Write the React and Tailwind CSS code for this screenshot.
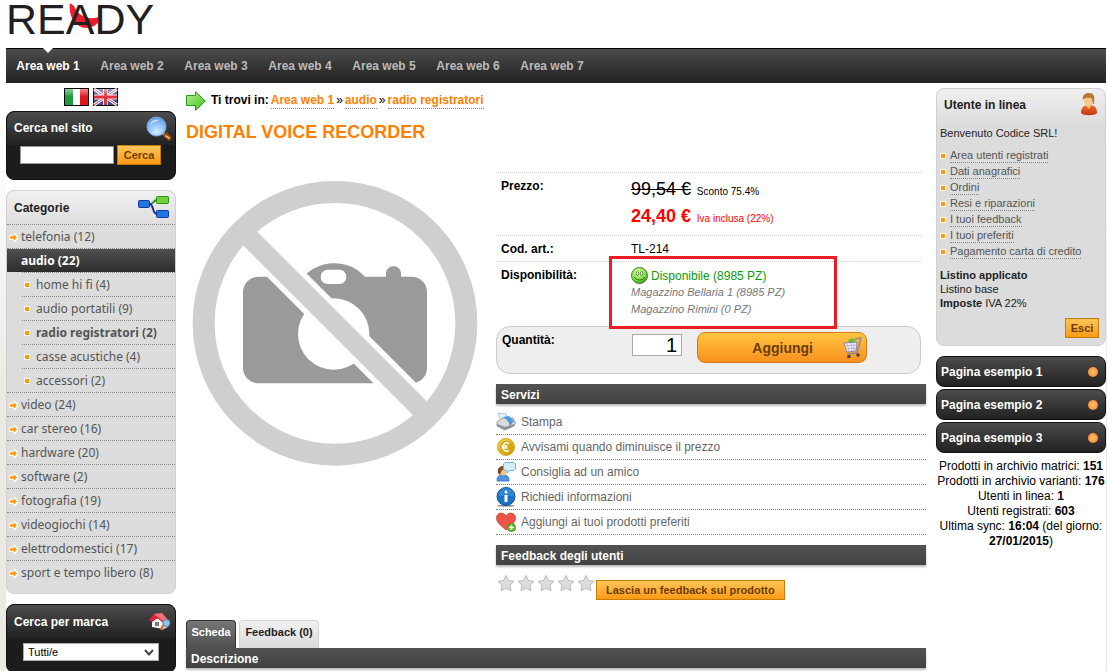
import React,{useState} from "react";

const areas=[
"Area web 1",
"Area web 2",
"Area web 3",
"Area web 4",
"Area web 5",
"Area web 6",
"Area web 7"
]

const categories=[
{name:"telefonia (12)"},
{name:"audio (22)",open:true,children:[
"home hi fi (4)",
"audio portatili (9)",
"radio registratori (2)",
"casse acustiche (4)",
"accessori (2)"
]},
{name:"video (24)"},
{name:"car stereo (16)"},
{name:"hardware (20)"},
{name:"software (2)"},
{name:"fotografia (19)"},
{name:"videogiochi (14)"},
{name:"elettrodomestici (17)"},
{name:"sport e tempo libero (8)"}
]

const userLinks=[
"Area utenti registrati",
"Dati anagrafici",
"Ordini",
"Resi e riparazioni",
"I tuoi feedback",
"I tuoi preferiti",
"Pagamento carta di credito"
]

const pages=["Pagina esempio 1","Pagina esempio 2","Pagina esempio 3"]

function Logo(){

return(

<a href="#" aria-label="READY" className="relative block h-12 w-fit text-[43px] leading-[38px] text-[#231f20]">
<svg className="absolute top-[2px] left-[63px] h-[26px] w-[34px]" viewBox="0 0 34 26" aria-hidden="true">
<path d="M1 1C-1 14 6 25 17 26C25 26 30 21 33 14C22 19 9 15 5 4Z" fill="#ed1c2e"/>
</svg>
<span className="relative block h-12">READY</span>
</a>

)

}

function FlagItaly(){

return(

<svg width="25" height="18" viewBox="0 0 25 18" aria-hidden="true">
<defs>
<linearGradient id="flagGloss" x1="0" y1="0" x2="0" y2="1">
<stop offset="0" stopColor="#fff" stopOpacity=".5"/>
<stop offset=".5" stopColor="#fff" stopOpacity="0"/>
</linearGradient>
</defs>
<rect width="25" height="18" fill="#000"/>
<rect x="1" y="1" width="8" height="16" fill="#1a9b3c"/>
<rect x="9" y="1" width="7" height="16" fill="#fff"/>
<rect x="16" y="1" width="8" height="16" fill="#e3131b"/>
<rect x="1" y="1" width="23" height="16" fill="url(#flagGloss)"/>
</svg>

)

}

function FlagUk(){

return(

<svg width="25" height="18" viewBox="0 0 25 18" aria-hidden="true">
<rect width="25" height="18" fill="#000"/>
<rect x="1" y="1" width="23" height="16" fill="#3a4f96"/>
<path d="M1 1L24 17M24 1L1 17" stroke="#fff" strokeWidth="3"/>
<path d="M1 1L24 17M24 1L1 17" stroke="#e0303c" strokeWidth="1"/>
<path d="M12.500 1V17M1 9H24" stroke="#f4dede" strokeWidth="5"/>
<path d="M12.500 1V17M1 9H24" stroke="#e0303c" strokeWidth="3"/>
<rect x="1" y="1" width="23" height="16" fill="url(#flagGloss)"/>
</svg>

)

}

function SearchIcon(){

return(

<svg width="26" height="26" viewBox="0 0 26 26" aria-hidden="true">
<defs>
<radialGradient id="lens" cx=".5" cy=".8" r=".8">
<stop offset="0" stopColor="#d4ecff"/>
<stop offset=".6" stopColor="#86bff6"/>
<stop offset="1" stopColor="#5b94e2"/>
</radialGradient>
</defs>
<path d="M17 17L20 20" stroke="#bbb" strokeWidth="3"/>
<path d="M20 19L23 22" stroke="#8a4a10" strokeWidth="5" strokeLinecap="round"/>
<path d="M20 20L23 22" stroke="#f0b060" strokeWidth="2" strokeLinecap="round"/>
<circle cx="10.500" cy="10.500" r="9.500" fill="url(#lens)" stroke="#7fa8e0"/>
<path d="M4 9C5 4 9 3 14 4C11 5 7 6 4 9Z" fill="#fff" opacity=".6"/>
</svg>

)

}

function TreeIcon(){

return(

<svg width="31" height="23" viewBox="0 0 31 23" aria-hidden="true">
<path d="M12 8C16 8 15 4 19 4" stroke="#2f8f1c" strokeWidth="2" fill="none"/>
<path d="M12 8C16 9 14 18 19 18" stroke="#20308c" strokeWidth="2" fill="none"/>
<rect x=".5" y="4.500" width="11" height="7" rx="1" fill="#1f74e0" stroke="#123c9c"/>
<rect x="18.500" y=".5" width="12" height="7" rx="1" fill="#6fd23c" stroke="#2f8f1c"/>
<rect x="18.500" y="14.500" width="12" height="7" rx="1" fill="#1f74e0" stroke="#123c9c"/>
</svg>

)

}

function HouseIcon(){

return(

<svg width="22" height="18" viewBox="0 0 22 18" aria-hidden="true">
<path d="M3 8L8 5L14 9V16L3 14Z" fill="#f2f2f2"/>
<path d="M13 8L19 7V14L13 17Z" fill="#cfcfcf"/>
<path d="M0 7L5 1L13 0L19 7L13 9L9 5L3 9Z" fill="#d8283a"/>
<path d="M5 1L13 0L19 7L14 8Z" fill="#f0707c"/>
<rect x="6" y="9" width="4" height="4" fill="#7a7a7a"/>
<path d="M14 12L12 17" stroke="#e05a20" strokeWidth="2"/>
<circle cx="17.500" cy="10" r="3.500" fill="#8cc4ee" stroke="#4a86b8"/>
</svg>

)

}

function UserIcon(){

return(

<svg width="18" height="23" viewBox="0 0 18 23" aria-hidden="true">
<defs>
<linearGradient id="shirt" x1="0" y1="0" x2="0" y2="1">
<stop offset="0" stopColor="#f07038"/>
<stop offset="1" stopColor="#c03408"/>
</linearGradient>
</defs>
<path d="M1 20C1 14 4 12 9 12C14 12 17 14 17 20C15 23 3 23 1 20Z" fill="url(#shirt)"/>
<path d="M6 11H11V13L9 16L6 13Z" fill="#f0c078"/>
<ellipse cx="8.500" cy="7.500" rx="4.500" ry="5.500" fill="#f6cb84"/>
<path d="M3 7C2 2 5 0 9 0C14 0 15 3 14 11C12 11 13 6 11 5C8 5 5 4 3 7Z" fill="#b87830"/>
</svg>

)

}

function GreenArrow(){

return(

<svg width="20" height="20" viewBox="0 0 20 20" aria-hidden="true">
<defs>
<linearGradient id="leaf" x1="0" y1="0" x2="1" y2="1">
<stop offset="0" stopColor="#b4f090"/>
<stop offset="1" stopColor="#3fc41c"/>
</linearGradient>
</defs>
<path d="M.5 4.500H9.500V.8L19.300 10L9.500 19.300V14.500H.5Z" fill="url(#leaf)" stroke="#1f9a1a"/>
</svg>

)

}

function NoPhoto(){

return(

<svg className="w-[300px] shrink-0" viewBox="18 -24 900 900" role="img" aria-label="Immagine non disponibile">
<g fill="#9a9a9a">
<rect x="189" y="290" width="552" height="320" rx="46"/>
<path d="M340 330C375 270 420 250 463 250C500 250 532 264 556 292L580 330Z"/>
<path d="M618 300V281C618 251 663 251 663 281V300Z"/>
</g>
<g fill="#fff">
<rect x="422" y="269" width="77" height="43" rx="21"/>
<circle cx="461" cy="462" r="107"/>
</g>
<path d="M220 185L720 685" stroke="#fff" strokeWidth="91"/>
<path d="M200 165L730 695" stroke="#cfcfcf" strokeWidth="59"/>
<circle cx="465" cy="430" r="394" fill="none" stroke="#cfcfcf" strokeWidth="66"/>
</svg>

)

}

function Smile(){

return(

<svg width="17" height="17" viewBox="0 0 17 17" aria-hidden="true">
<defs>
<radialGradient id="smile" cx=".4" cy=".3" r=".7">
<stop offset="0" stopColor="#d2fba0"/>
<stop offset=".7" stopColor="#7ee048"/>
<stop offset="1" stopColor="#3a9a1c"/>
</radialGradient>
</defs>
<circle cx="8.500" cy="8.500" r="8" fill="url(#smile)" stroke="#4c7a2c"/>
<ellipse cx="6.500" cy="6.500" rx="1.200" ry="2" fill="#fff" stroke="#2f6a10" strokeWidth=".7"/>
<ellipse cx="10.500" cy="6.500" rx="1.200" ry="2" fill="#fff" stroke="#2f6a10" strokeWidth=".7"/>
<path d="M3.500 10C5 14 12 14 13.500 10" fill="none" stroke="#2f6a10"/>
</svg>

)

}

function Cart(){

return(

<svg width="20" height="22" viewBox="0 0 20 22" aria-hidden="true">
<circle cx="9" cy="5" r="3.500" fill="#5fbf3c"/>
<path d="M1 6L14 5L13 14L4 15Z" fill="#f0ecf8" stroke="#8a86a4"/>
<path d="M4 6L6 14M8 6L9 14M11 6V14M2 9L14 8M3 12L13 11" stroke="#b4accc" strokeWidth=".8"/>
<path d="M12 2L18 1L14 16L4 17" fill="none" stroke="#8a8a9c" strokeWidth="1.500"/>
<circle cx="6" cy="19.500" r="1.800" fill="#444"/>
<circle cx="15" cy="18" r="1.800" fill="#444"/>
</svg>

)

}

function Printer(){

return(

<svg width="20" height="20" viewBox="0 0 20 20" aria-hidden="true">
<path d="M2 1L10 2L12 7L5 9Z" fill="#e4f1fc" stroke="#9cb8cc" strokeWidth=".8"/>
<path d="M1 10L6 6L17 6L19.500 11L18 14L9 18L1 14Z" fill="#d8dade" stroke="#8a8e94" strokeWidth=".8"/>
<path d="M7 5L13 4L18 9L14 14C13 10 11 7 7 5Z" fill="#4a9ce0"/>
<path d="M1 12L9 15L18 12V14L9 18L1 14Z" fill="#8c9098"/>
</svg>

)

}

function Coin(){

return(

<svg width="20" height="20" viewBox="0 0 20 20" aria-hidden="true">
<defs>
<linearGradient id="gold" x1="0" y1="0" x2="1" y2="1">
<stop offset="0" stopColor="#fbdc50"/>
<stop offset="1" stopColor="#c88c00"/>
</linearGradient>
</defs>
<circle cx="10" cy="10" r="8.500" fill="url(#gold)" stroke="#d8a818"/>
<circle cx="10" cy="10" r="6" fill="#d8a40c"/>
<path d="M13 6.500C9 4.500 7 7 7 10C7 13 9 15.500 13 13.500M5.500 9H11.500M5.500 11H11.500" fill="none" stroke="#fff" strokeWidth="1.500"/>
</svg>

)

}

function Friend(){

return(

<svg width="20" height="20" viewBox="0 0 20 20" aria-hidden="true">
<path d="M1 19C1 14 3 13 7 13C11 13 13 14 13 19Z" fill="#4f94dc" stroke="#2c68b0" strokeWidth=".8"/>
<ellipse cx="7" cy="9.500" rx="3.500" ry="4" fill="#f2c48c"/>
<path d="M2 11C1 6 4 4 7 4C10 4 11 6 10 8C8 8 6 7 5 10L4 13Z" fill="#7a4a20"/>
<path d="M9 .5H18L19.500 2V7L18 8.500H14L11 11V8.500H9L7.500 7V2Z" fill="#d4ecfc" stroke="#7ab0d8"/>
</svg>

)

}

function Info(){

return(

<svg width="20" height="20" viewBox="0 0 20 20" aria-hidden="true">
<ellipse cx="10" cy="18.800" rx="9" ry="1" fill="#9a9a9a"/>
<circle cx="10" cy="9.500" r="9" fill="#1b72c4" stroke="#0f549c"/>
<path d="M2 9C2 4 6 1 10 1C14 1 18 4 18 9Z" fill="#4a9ce4" opacity=".5"/>
<circle cx="10" cy="5" r="1.500" fill="#fff"/>
<rect x="8.500" y="8" width="3" height="7" fill="#fff"/>
</svg>

)

}

function Heart(){

return(

<svg width="20" height="20" viewBox="0 0 20 20" aria-hidden="true">
<path d="M10 18C4 13 .5 10 .5 6C.5 1 7 -1 10 4C13 -1 19.500 1 19.500 6C19.500 10 16 13 10 18Z" fill="#ec5448" stroke="#d0443a" strokeWidth=".8"/>
<circle cx="15.500" cy="15.500" r="4" fill="#5cb820" stroke="#3c8c10" strokeWidth=".8"/>
<path d="M15.500 13V18M13 15.500H18" stroke="#fff" strokeWidth="1.500"/>
</svg>

)

}

function Star(){

return(

<svg width="20" height="18" viewBox="0 0 20 18" aria-hidden="true">
<path d="M10 .5L12.500 5.500L18 6.300L14 10.200L15 15.700L10 13.100L5 15.700L6 10.200L2 6.300L7.500 5.500Z" fill="#dcdcdc" stroke="#bbb" strokeLinejoin="round"/>
</svg>

)

}

function ArrowBullet(){

return(

<svg className="mr-[3px] shrink-0" width="9" height="9" viewBox="0 0 9 9" aria-hidden="true">
<path d="M0 2H4V0H6L9 3V6L6 9H4V7H0Z" fill="#fff"/>
<path d="M1 3.300H4.500V1L8 4.500L4.500 8V5.700H1Z" fill="#ff9a0c"/>
</svg>

)

}

function Square(){

return <span className="size-[6px] shrink-0 border border-white bg-[#ff9a0c]"></span>

}

function SectionBar({children}){

return(

<h2 className="h-5 bg-linear-to-b from-[#525252] to-[#424242] pl-[5px] text-xs leading-[22px] font-bold text-white shadow-[0_2px_2px_#bbb]">
{children}
</h2>

)

}

const services=[
{label:"Stampa",Icon:Printer},
{label:"Avvisami quando diminuisce il prezzo",Icon:Coin},
{label:"Consiglia ad un amico",Icon:Friend},
{label:"Richiedi informazioni",Icon:Info},
{label:"Aggiungi ai tuoi prodotti preferiti",Icon:Heart}
]

const orange="border border-[#c77c05] bg-linear-to-b from-[#ffc555] to-[#ff9a0c] font-bold text-[#6b3d00]"

function LeftColumn(){

const [search,setSearch]=useState("")

return(

<aside className="w-[170px] shrink-0">

<div className="flex h-7 justify-center gap-1 pt-[5px]">
<button aria-label="Italiano" className="h-[18px]"><FlagItaly/></button>
<button aria-label="English" className="h-[18px]"><FlagUk/></button>
</div>

<form className="h-[69px] rounded-lg border border-[#111] bg-[#1c1c1c]" onSubmit={e=>e.preventDefault()}>
<div className="flex h-[33px] items-start justify-between rounded-t-lg bg-linear-to-b from-[#4c4c4c] to-[#222] pt-1 pr-[3px] pl-[7px]">
<label htmlFor="search" className="pt-1 font-bold text-white">Cerca nel sito</label>
<SearchIcon/>
</div>
<div className="flex items-center gap-[3px] pl-[13px]">
<input
id="search"
className="h-[18px] w-[94px] border border-[#999] bg-white px-1"
value={search}
onChange={e=>setSearch(e.target.value)}
/>
<button className={`h-5 w-11 text-[11px] leading-4 ${orange}`}>Cerca</button>
</div>
</form>

<nav className="mt-[10px] rounded-lg border border-[#d0d0d0] bg-[#dcdcdc] pb-[9px]">
<div className="flex h-[33px] items-center justify-between rounded-t-lg bg-linear-to-b from-[#f0f0f0] to-[#dedede] pr-[6px] pl-[7px]">
<h2 className="font-bold text-[#222]">Categorie</h2>
<TreeIcon/>
</div>
<ul className="font-['Noto_Sans','DejaVu_Sans',sans-serif] text-[#555]">
{categories.map(c=>(

<li key={c.name} className="border-t border-dotted border-[#888]">
<a
href="#"
className={c.open
? "flex h-[23px] items-center bg-linear-to-b from-[#505050] to-[#2c2c2c] pt-px pl-[14px] font-bold text-white"
: "flex h-[23px] items-center pt-px pl-[2px]"}
>
{!c.open && <ArrowBullet/>}
{c.name}
</a>
{c.children && (

<ul className="pl-[15px]">
{c.children.map(name=>(

<li key={name} className="border-t border-dotted border-[#888]">
<a
href="#"
className={name==="radio registratori (2)"
? "flex h-[23px] items-center gap-[6px] pt-px pl-[2px] font-bold"
: "flex h-[23px] items-center gap-[6px] pt-px pl-[2px]"}
>
<Square/>
{name}
</a>
</li>

))}
</ul>

)}
</li>

))}
</ul>
</nav>

<div className="mt-[10px] h-[69px] rounded-lg border border-[#111] bg-[#1c1c1c]">
<div className="flex h-[33px] items-center justify-between rounded-t-lg bg-linear-to-b from-[#4c4c4c] to-[#222] pr-1 pl-[7px]">
<label htmlFor="brand" className="font-bold text-white">Cerca per marca</label>
<HouseIcon/>
</div>
<div className="relative ml-4 w-[136px] pt-[5px]">
<select id="brand" className="block h-[18px] w-full appearance-none border border-[#aaa] bg-white pl-1 text-[11px] text-black">
<option>Tutti/e</option>
</select>
<svg className="pointer-events-none absolute top-[11px] right-[5px]" width="10" height="7" viewBox="0 0 10 7" aria-hidden="true">
<path d="M1 1L5 5.500L9 1" fill="none" stroke="#444" strokeWidth="2"/>
</svg>
</div>
</div>

</aside>

)

}

function ProductInfo(){

const [quantity,setQuantity]=useState("1")

return(

<div className="min-w-0 flex-1 text-xs text-black">

<dl className="mr-[5px]">

<div className="grid h-[63px] grid-cols-[130px_1fr] border-t border-dotted border-[#ccc] pl-[5px]">
<dt className="pt-[5px] font-bold">Prezzo:</dt>
<dd className="pt-[3px] text-[10px] leading-[27px]">
<p className="h-[27px]"><s className="mr-[3px] text-lg leading-[27px]">99,54 €</s> Sconto 75.4%</p>
<p className="h-[27px] text-[#f00]"><b className="mr-[3px] text-lg leading-[27px]">24,40 €</b> Iva inclusa (22%)</p>
</dd>
</div>

<div className="grid h-[26px] grid-cols-[130px_1fr] items-center border-t border-dotted border-[#ccc] pl-[5px]">
<dt className="font-bold">Cod. art.:</dt>
<dd>TL-214</dd>
</div>

<div className="grid h-[65px] grid-cols-[130px_1fr] border-t border-dotted border-[#ccc] pl-[5px]">
<dt className="pt-[5px] font-bold">Disponibilità:</dt>
<dd className="relative pt-[5px]">
<p className="flex h-[17px] items-center gap-[3px] text-[#0a9a0a]"><Smile/>Disponibile (8985 PZ)</p>
<p className="text-[11px] leading-[17px] text-[#777] italic">Magazzino Bellaria 1 (8985 PZ)</p>
<p className="text-[11px] leading-[17px] text-[#777] italic">Magazzino Rimini (0 PZ)</p>
<span className="absolute -top-[6px] -left-[22px] z-10 h-[73px] w-[228px] border-3 border-[#ed1c24]"></span>
</dd>
</div>

</dl>

<form
className="mr-[5px] grid h-12 grid-cols-[130px_50px_170px] items-start rounded-[14px] border border-[#ccc] bg-[#eee] pt-[5px] pl-[5px]"
onSubmit={e=>e.preventDefault()}
>
<label htmlFor="quantity" className="font-bold">Quantità:</label>
<input
id="quantity"
className="mt-[2px] h-[22px] border border-[#aaa] bg-white px-1 text-right text-xl leading-5"
value={quantity}
onChange={e=>setQuantity(e.target.value)}
/>
<button className="ml-[15px] flex h-[31px] w-[170px] items-center justify-end gap-[30px] rounded-lg border border-[#d87a1c] bg-linear-to-b from-[#ffc540] to-[#f8901c] pr-[3px] text-sm font-bold text-[#6b3d00]">
Aggiungi
<Cart/>
</button>
</form>

<section className="mt-[10px]">
<SectionBar>Servizi</SectionBar>
<ul className="pt-[6px] text-[#666]">
{services.map(({label,Icon})=>(

<li key={label} className="border-b border-dotted border-[#888]">
<a href="#" className="flex h-6 items-center gap-[5px]">
<Icon/>
{label}
</a>
</li>

))}
</ul>
</section>

<section className="mt-[10px]">
<SectionBar>Feedback degli utenti</SectionBar>
<div className="flex items-start pt-[10px]">
{[1,2,3,4,5].map(n=><Star key={n}/>)}
<button className={`mt-[5px] h-5 px-[9px] text-[11px] leading-4 ${orange}`}>Lascia un feedback sul prodotto</button>
</div>
</section>

</div>

)

}

function Product(){

return(

<main className="min-w-0 flex-1">

<div className="flex h-[35px] items-center gap-[5px] text-black">
<GreenArrow/>
<p className="flex gap-[2px]">
<b>Ti trovi in:</b>
<a href="#" className="border-b border-dotted border-[#888] font-bold text-[#ff7f00]">Area web 1</a>
<span>»</span>
<a href="#" className="border-b border-dotted border-[#888] font-bold text-[#ff7f00]">audio</a>
<span>»</span>
<a href="#" className="border-b border-dotted border-[#888] font-bold text-[#ff7f00]">radio registratori</a>
</p>
</div>

<h1 className="h-[54px] text-lg leading-[28px] font-bold text-[#ff7f00]">DIGITAL VOICE RECORDER</h1>

<div className="flex items-start gap-[10px]">
<NoPhoto/>
<ProductInfo/>
</div>

<div className="mt-5 flex gap-[3px] text-[11px] font-bold">
<button className="h-7 w-[50px] rounded-t-[4px] border border-b-0 border-[#333] bg-linear-to-b from-[#777] to-[#505050] pb-1 text-white">Scheda</button>
<button className="h-7 w-20 rounded-t-[4px] border border-b-0 border-[#d4d4d4] bg-linear-to-b from-[#f0f0f0] to-[#dcdcdc] pb-1 text-[#222]">Feedback (0)</button>
</div>
<SectionBar>Descrizione</SectionBar>

</main>

)

}

function RightColumn(){

return(

<aside className="w-[170px] shrink-0 pt-[5px]">

<section className="h-[258px] rounded-lg border border-[#d0d0d0] bg-[#dcdcdc] text-[11px] text-[#222]">
<div className="flex h-9 items-start justify-between rounded-t-lg bg-linear-to-b from-[#f0f0f0] to-[#dcdcdc] pt-1 pr-[7px] pl-[7px]">
<h2 className="pt-1 text-xs font-bold">Utente in linea</h2>
<UserIcon/>
</div>
<p className="pl-[3px] leading-4">Benvenuto Codice SRL!</p>
<ul className="pt-[7px] pl-[3px]">
{userLinks.map(name=>(

<li key={name} className="flex h-4 items-center gap-1">
<Square/>
<a href="#" className="border-b border-dotted border-[#888] leading-[13px] text-[#555]">{name}</a>
</li>

))}
</ul>
<div className="pt-2 pl-[3px] leading-[14px]">
<p className="font-bold">Listino applicato</p>
<p>Listino base</p>
<p><b>Imposte</b> IVA 22%</p>
</div>
<div className="flex justify-end pt-2 pr-[6px]">
<button className={`h-5 w-[34px] leading-4 ${orange}`}>Esci</button>
</div>
</section>

<nav className="mt-[10px] flex flex-col gap-[2px]">
{pages.map(name=>(

<a key={name} href="#" className="flex h-[31px] items-center justify-between rounded-lg border border-[#111] bg-linear-to-b from-[#4c4c4c] to-[#222] pr-[7px] pl-1 font-bold text-white">
{name}
<span className="size-[10px] rounded-full bg-radial from-[#ffc070] to-[#f07c10]"></span>
</a>

))}
</nav>

<div className="pt-[6px] text-center leading-[15px] whitespace-nowrap text-black">
<p>Prodotti in archivio matrici: <b>151</b></p>
<p>Prodotti in archivio varianti: <b>176</b></p>
<p>Utenti in linea: <b>1</b></p>
<p>Utenti registrati: <b>603</b></p>
<p>Ultima sync: <b>16:04</b> (del giorno:</p>
<p><b>27/01/2015</b>)</p>
</div>

</aside>

)

}

function App(){

const [area,setArea]=useState("Area web 1")

return(

<div className="min-h-screen bg-linear-to-b from-white from-20% to-[#ece9e4] to-60% pr-px pl-[6px] font-['Liberation_Sans',Arial,sans-serif] text-xs">

<div className="bg-white">

<Logo/>

<nav className="flex h-[35px] border-t border-black bg-linear-to-b from-[#4c4c4c] to-[#222]">
{areas.map(name=>(

<button
key={name}
onClick={()=>setArea(name)}
className={area===name
? "relative w-[84px] font-bold whitespace-nowrap text-white"
: "relative w-[84px] font-bold whitespace-nowrap text-[#bbb]"}
>
{name}
{area===name && (

<svg className="absolute -top-px left-[37px]" width="10" height="5" viewBox="0 0 10 5" aria-hidden="true">
<path d="M0 0H10L5 5Z" fill="#fff"/>
</svg>

)}
</button>

))}
</nav>

<div className="flex gap-[10px]">
<LeftColumn/>
<Product/>
<RightColumn/>
</div>

</div>

</div>

)

}

export default App
